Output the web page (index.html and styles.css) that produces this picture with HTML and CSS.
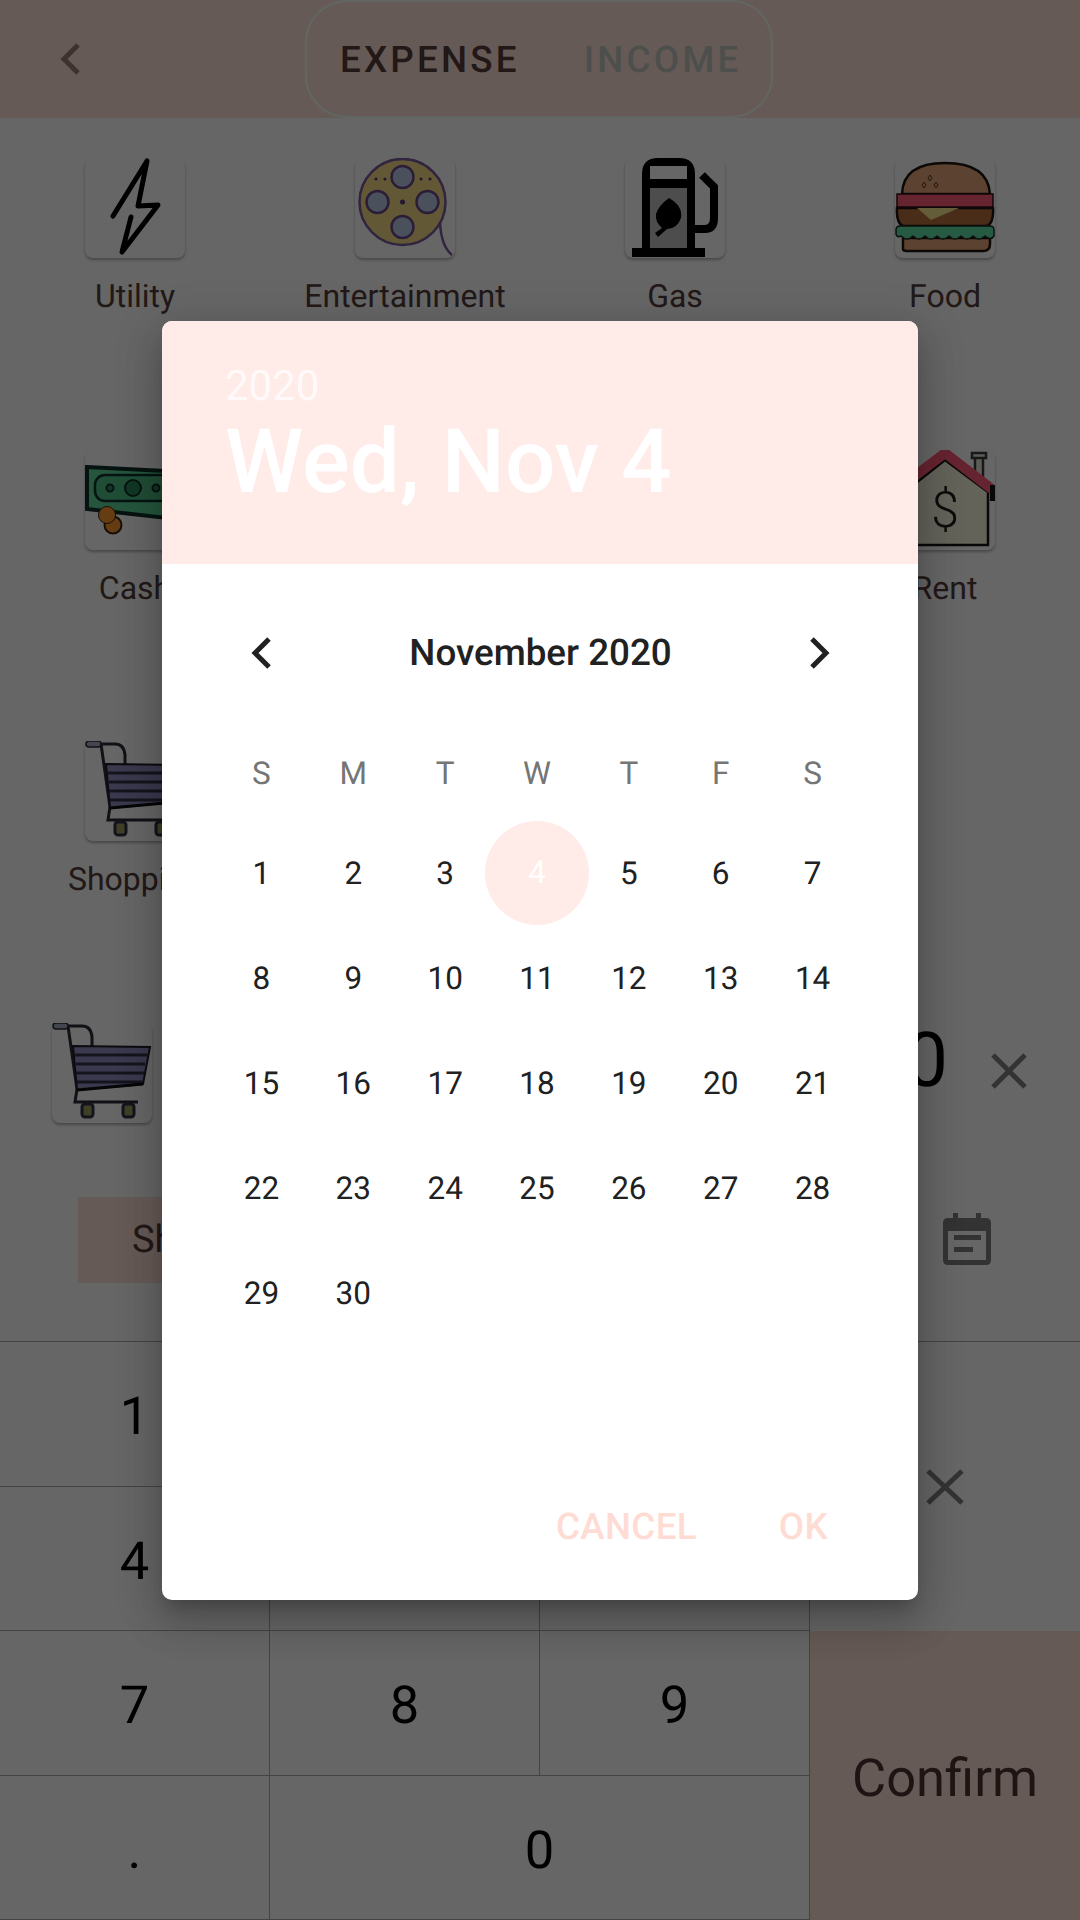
FILE: index.html

```html
<!DOCTYPE html>
<html lang="en">
<head>
    <meta charset="UTF-8">
    <title>Add Expense</title>
    <meta name="viewport" content="width=device-width, initial-scale=1.0">
    <link rel="stylesheet" href="styles.css">
</head>
<body>
    <svg class="defs">
        <symbol id="cart" viewBox="0 0 100 100">
            <path d="M16 3H30Q39 3 40 14V24M16 3L25 66L23 79H86" fill="none" stroke="#2c2c38" stroke-width="3"/>
            <rect x="1" y="0" width="15" height="6" rx="3" fill="#a8b0c4" stroke="#2c2c38" stroke-width="1.5"/>
            <polygon points="21,23 98,24 91,61 25,67" fill="#9290c0" stroke="#1c1c28" stroke-width="2"/>
            <path d="M23 32H95M24 41H93M24 50H92M25 59H91" stroke="#34344a" stroke-width="3"/>
            <path d="M25 67L91 61" stroke="#101018" stroke-width="3"/>
            <rect x="30" y="81" width="11" height="13" rx="3" fill="#a0a060" stroke="#34344a" stroke-width="3"/>
            <rect x="71" y="81" width="11" height="13" rx="3" fill="#a0a060" stroke="#34344a" stroke-width="3"/>
        </symbol>
    </svg>

    <div class="topbar">
        <svg class="back" viewBox="0 0 20 32"><path d="M18 2L4 16L18 30" fill="none" stroke="#96807a" stroke-width="5"/></svg>
        <div class="toggle">
            <span class="toggle-on">EXPENSE</span>
            <span class="toggle-off">INCOME</span>
        </div>
    </div>

    <div class="categories">
        <div class="cat">
            <div class="cat-icon">
                <svg viewBox="0 0 100 100"><path d="M28 58L62 3L53 48L73 47L37 94L46 59" fill="none" stroke="#000" stroke-width="5" stroke-linejoin="round" stroke-linecap="round"/></svg>
            </div>
            <div class="cat-name">Utility</div>
        </div>
        <div class="cat">
            <div class="cat-icon">
                <svg viewBox="0 0 100 100">
                    <path d="M85 64Q86 88 97 97" fill="none" stroke="#7c5a9c" stroke-width="2.5"/>
                    <circle cx="47.5" cy="44" r="43" fill="#f5dc88" stroke="#7c5a9c" stroke-width="2.5"/>
                    <g fill="#bcc8e8" stroke="#6c4a8c" stroke-width="2.5">
                        <circle cx="47.5" cy="19" r="11"/>
                        <circle cx="22.5" cy="44" r="11"/>
                        <circle cx="72.5" cy="44" r="11"/>
                        <circle cx="47.5" cy="69" r="11"/>
                    </g>
                    <circle cx="47.5" cy="44" r="2.5" fill="#5c3a7c"/>
                    <g fill="#5c3a7c">
                        <circle cx="21" cy="21" r="1.6"/>
                        <circle cx="30" cy="21" r="1.6"/>
                        <circle cx="66" cy="21" r="1.6"/>
                        <circle cx="75" cy="21" r="1.6"/>
                    </g>
                </svg>
            </div>
            <div class="cat-name">Entertainment</div>
        </div>
        <div class="cat">
            <div class="cat-icon">
                <svg viewBox="0 0 100 100">
                    <path d="M21 92V16Q21 4 33 4H54Q66 4 66 16V92" fill="#c0c0c0" stroke="#000" stroke-width="8"/>
                    <rect x="25" y="8" width="37" height="13" fill="#fff"/>
                    <rect x="21" y="21" width="45" height="9" fill="#000"/>
                    <rect x="7" y="90" width="73" height="9" fill="#000"/>
                    <path d="M70 71H80Q89 71 89 60V29L77 17" fill="none" stroke="#000" stroke-width="8"/>
                    <path d="M44 40Q58 48 56 60Q52 71 42 71L33 79L30 75L37 70Q30 64 31 56Q34 47 44 40Z" fill="#000"/>
                </svg>
            </div>
            <div class="cat-name">Gas</div>
        </div>
        <div class="cat">
            <div class="cat-icon">
                <svg viewBox="0 0 100 100">
                    <path d="M7 36Q8 5 50 5Q93 5 95 36Z" fill="#e6a578" stroke="#1e1410" stroke-width="2.5"/>
                    <path d="M35 17l2 3-2 3-2-3zM29 24l2 3-2 3-2-3zM41 24l2 3-2 3-2-3z" fill="none" stroke="#5a3a20" stroke-width="1"/>
                    <path d="M2 50Q1 65 8 68H92Q99 65 98 50Z" fill="#b87040" stroke="#1e1410" stroke-width="2.5"/>
                    <polygon points="22,50 64,50 36,62" fill="#f8e890"/>
                    <rect x="2" y="36" width="96" height="13" fill="#ff5a78" stroke="#2e1418" stroke-width="1.5"/>
                    <path d="M8 80V91Q8 93 12 93H88Q95 93 95 86V80Z" fill="#e6a578" stroke="#1e1410" stroke-width="2.5"/>
                    <path d="M1 72Q1 68 5 68H95Q99 68 99 72V78Q96 83 90 78Q84 84 78 78Q72 84 66 78Q60 84 54 78Q48 84 42 78Q36 84 30 78Q24 84 18 78Q12 84 6 78Q2 80 1 76Z" fill="#5fe0a8" stroke="#1e2c24" stroke-width="1.5"/>
                </svg>
            </div>
            <div class="cat-name">Food</div>
        </div>

        <div class="cat">
            <div class="cat-icon">
                <svg viewBox="0 0 100 100">
                    <path d="M2 17L100 22V70L2 59Z" fill="#5ed89a" stroke="#10302a" stroke-width="4"/>
                    <rect x="10" y="25" width="78" height="26" rx="10" fill="#50c088" stroke="#10302a" stroke-width="2.5"/>
                    <circle cx="25" cy="38" r="3.5" fill="#2c8a60" stroke="#10302a" stroke-width="2"/>
                    <circle cx="48" cy="38" r="8" fill="#2c8a60" stroke="#10302a" stroke-width="2"/>
                    <circle cx="71" cy="38" r="3.5" fill="#2c8a60" stroke="#10302a" stroke-width="2"/>
                    <circle cx="28" cy="75" r="8.5" fill="#ff9a30" stroke="#3a2410" stroke-width="2"/>
                    <circle cx="22" cy="65" r="8.5" fill="#ff9a30" stroke="#3a2410" stroke-width="1"/>
                </svg>
            </div>
            <div class="cat-name">Cash</div>
        </div>
        <div class="cat"></div>
        <div class="cat"></div>
        <div class="cat">
            <div class="cat-icon">
                <svg viewBox="0 0 100 100">
                    <rect x="80" y="5" width="8" height="28" fill="#e8e8dc" stroke="#3c3c3c" stroke-width="2.5"/>
                    <rect x="77" y="3" width="14" height="5" fill="#e8e8dc" stroke="#3c3c3c" stroke-width="2.5"/>
                    <polygon points="7,44 50,10 93,42 93,95 7,95" fill="#f8f8e0" stroke="#151515" stroke-width="2.5"/>
                    <path d="M0 41L50 3L98 40" fill="none" stroke="#ff5a78" stroke-width="10"/>
                    <rect x="95" y="35" width="5" height="16" fill="#151515"/>
                    <text class="rent-sign" x="50" y="77">$</text>
                </svg>
            </div>
            <div class="cat-name">Rent</div>
        </div>

        <div class="cat">
            <div class="cat-icon">
                <svg viewBox="0 0 100 100"><use href="#cart"/></svg>
            </div>
            <div class="cat-name">Shopping</div>
        </div>
    </div>

    <div class="entry">
        <div class="cat-icon">
            <svg viewBox="0 0 100 100"><use href="#cart"/></svg>
        </div>
        <div class="amount">0</div>
        <svg class="clear" viewBox="0 0 36 36"><path d="M2 2L34 34M34 2L2 34" stroke="#808080" stroke-width="5"/></svg>
    </div>

    <div class="note-row">
        <div class="chip">Shopping</div>
        <svg class="date-btn" viewBox="0 0 48 52">
            <path d="M10 0H15V5H33V0H38V5H43Q48 5 48 10V47Q48 52 43 52H5Q0 52 0 47V10Q0 5 5 5H10Z" fill="#808080"/>
            <rect x="5" y="18" width="38" height="29" fill="#fff"/>
            <path d="M11 22H38V27H11ZM11 34H30V39H11Z" fill="#808080"/>
        </svg>
    </div>

    <div class="keypad">
        <div class="key">1</div>
        <div class="key">2</div>
        <div class="key">3</div>
        <div class="key key-back">
            <svg class="back-x" viewBox="0 0 38 36"><path d="M2 2L36 34M36 2L2 34" stroke="#808080" stroke-width="5"/></svg>
        </div>
        <div class="key">4</div>
        <div class="key">5</div>
        <div class="key">6</div>
        <div class="key">7</div>
        <div class="key">8</div>
        <div class="key">9</div>
        <div class="key key-confirm">Confirm</div>
        <div class="key">.</div>
        <div class="key key-zero">0</div>
    </div>

    <div class="scrim">
        <div class="dialog">
            <div class="dialog-head">
                <div class="head-year">2020</div>
                <div class="head-date">Wed, Nov 4</div>
            </div>
            <div class="month-nav">
                <svg class="chev" viewBox="0 0 20 32"><path d="M18 2L4 16L18 30" fill="none" stroke="#212121" stroke-width="5"/></svg>
                <div class="month-title">November 2020</div>
                <svg class="chev" viewBox="0 0 20 32"><path d="M2 2L16 16L2 30" fill="none" stroke="#212121" stroke-width="5"/></svg>
            </div>
            <div class="week-head">
                <span>S</span><span>M</span><span>T</span><span>W</span><span>T</span><span>F</span><span>S</span>
            </div>
            <div class="days">
                <div class="day">1</div><div class="day">2</div><div class="day">3</div>
                <div class="day"><span class="day-on">4</span></div>
                <div class="day">5</div><div class="day">6</div><div class="day">7</div>
                <div class="day">8</div><div class="day">9</div><div class="day">10</div><div class="day">11</div>
                <div class="day">12</div><div class="day">13</div><div class="day">14</div>
                <div class="day">15</div><div class="day">16</div><div class="day">17</div><div class="day">18</div>
                <div class="day">19</div><div class="day">20</div><div class="day">21</div>
                <div class="day">22</div><div class="day">23</div><div class="day">24</div><div class="day">25</div>
                <div class="day">26</div><div class="day">27</div><div class="day">28</div>
                <div class="day">29</div><div class="day">30</div>
            </div>
            <div class="actions">
                <span>CANCEL</span>
                <span>OK</span>
            </div>
        </div>
    </div>
</body>
</html>
```

FILE: styles.css

```css
:root {
    --pink: #ffe0d8;
    --pale: #ffebe7;
    --brown: #553e3a;
    --ink: #212121;
}
body {
    position: relative;
    display: flex;
    flex-direction: column;
    width: 1080px;
    height: 1920px;
    margin: 0;
    overflow: hidden;
    background-color: #fff;
    font-family: Roboto, sans-serif;
    color: #000;
    text-rendering: geometricPrecision;
}
.defs {
    display: none;
}
svg {
    display: block;
}

/* top bar */
.topbar {
    display: flex;
    align-items: center;
    height: 118px;
    background-color: var(--pink);
}
.back {
    width: 20px;
    height: 32px;
    margin: 0 225px 0 60px;
}
.toggle {
    display: flex;
    align-items: center;
    gap: 64px;
    box-sizing: border-box;
    width: 468px;
    height: 118px;
    padding: 0 0 0 33px;
    border: 2.5px solid #f4fff8;
    border-radius: 42px;
    font-size: 36.75px;
    font-weight: 500;
    letter-spacing: 3.2px;
}
.toggle-on {
    color: var(--brown);
}
.toggle-off {
    color: #c0c5c0;
}

/* categories */
.categories {
    display: grid;
    grid-template-columns: repeat(4, 270px);
    grid-auto-rows: 291.5px;
    height: 865px;
    padding-top: 40px;
}
.cat {
    display: flex;
    flex-direction: column;
    align-items: center;
}
.cat-icon {
    flex: none;
    width: 100px;
    height: 100px;
    border-radius: 8px;
    background-color: #fff;
    box-shadow: 0 2px 3px rgba(0,0,0,0.3);
}
.cat-icon svg {
    filter: blur(0.6px);
}
.cat-name {
    margin-top: 20px;
    font-size: 32px;
    line-height: 37px;
    color: var(--brown);
}
.rent-sign {
    font-family: Roboto, sans-serif;
    font-size: 50px;
    font-weight: 300;
    text-anchor: middle;
    fill: #222;
}

/* amount */
.entry {
    display: flex;
    align-items: center;
    height: 100px;
    padding-left: 52px;
}
.amount {
    margin-left: auto;
    margin-top: -26px;
    font-size: 76px;
    line-height: 100px;
}
.clear {
    width: 36px;
    height: 36px;
    margin: -5px 53px 0 43px;
}

/* note row */
.note-row {
    display: flex;
    align-items: center;
    justify-content: space-between;
    height: 86px;
    margin-top: 74px;
    padding: 0 89px 0 78px;
}
.chip {
    width: 400px;
    height: 86px;
    padding-left: 54px;
    box-sizing: border-box;
    background-color: var(--pink);
    font-size: 38px;
    line-height: 86px;
    color: var(--brown);
}
.date-btn {
    width: 48px;
    height: 52px;
    margin-top: -2px;
}

/* keypad */
.keypad {
    display: grid;
    grid-template-columns: 270px 270px 270px 270px;
    grid-template-rows: repeat(4, 1fr);
    box-sizing: border-box;
    height: 579px;
    margin-top: 58px;
    border-top: 1px solid #aaa;
}
.key {
    display: flex;
    align-items: center;
    justify-content: center;
    box-sizing: border-box;
    padding-top: 5px;
    border-right: 1px solid #aaa;
    border-bottom: 1px solid #aaa;
    font-size: 52.5px;
}
.key-back {
    grid-row: span 2;
    padding-top: 0;
    border-right: none;
    border-bottom: none;
}
.back-x {
    width: 38px;
    height: 36px;
}
.key-confirm {
    grid-row: span 2;
    border-right: none;
    border-bottom: none;
    border-left: 1px solid #aaa;
    margin-left: -1px;
    background-color: var(--pink);
    color: #4a3430;
}
.key-zero {
    grid-column: span 2;
}

/* date picker */
.scrim {
    position: absolute;
    inset: 0;
    display: flex;
    align-items: center;
    justify-content: center;
    background-color: rgba(0,0,0,0.6);
}
.dialog {
    display: flex;
    flex-direction: column;
    width: 756px;
    height: 1279px;
    border-radius: 10px;
    overflow: hidden;
    background-color: #fff;
    box-shadow: 0 24px 38px 3px rgba(0,0,0,0.14), 0 9px 46px 8px rgba(0,0,0,0.12), 0 11px 15px -7px rgba(0,0,0,0.2);
}
.dialog-head {
    height: 243px;
    box-sizing: border-box;
    padding: 42px 0 0 63px;
    background-color: var(--pale);
    color: #fff;
}
.head-year {
    font-size: 42px;
    line-height: 48px;
    opacity: 0.75;
}
.head-date {
    margin-top: 2px;
    font-size: 89px;
    font-weight: 500;
    line-height: 98px;
}
.month-nav {
    display: flex;
    align-items: center;
    justify-content: space-between;
    height: 90px;
    margin-top: 44px;
    margin-bottom: 1px;
    padding: 0 88px 0 89px;
}
.chev {
    width: 20px;
    height: 32px;
}
.month-title {
    font-size: 36.75px;
    font-weight: 500;
    color: var(--ink);
}
.week-head,
.days {
    display: grid;
    grid-template-columns: repeat(7, 91.86px);
    padding-left: 53.5px;
}
.week-head {
    height: 50px;
    margin-top: 50px;
    font-size: 31.5px;
    line-height: 50px;
    text-align: center;
    color: #757575;
}
.days {
    grid-auto-rows: 105px;
    margin-top: 22px;
}
.day {
    display: flex;
    align-items: center;
    justify-content: center;
    font-size: 31.5px;
    color: var(--ink);
}
.day-on {
    flex: none;
    width: 104px;
    height: 104px;
    border-radius: 50%;
    background-color: var(--pale);
    line-height: 104px;
    text-align: center;
    color: #fff;
}
.actions {
    display: flex;
    justify-content: flex-end;
    gap: 82px;
    margin-top: auto;
    padding: 0 90px 51px 0;
    font-size: 36.75px;
    font-weight: 500;
    letter-spacing: 0.3px;
    line-height: 44px;
    color: #ffdcd3;
}
```
